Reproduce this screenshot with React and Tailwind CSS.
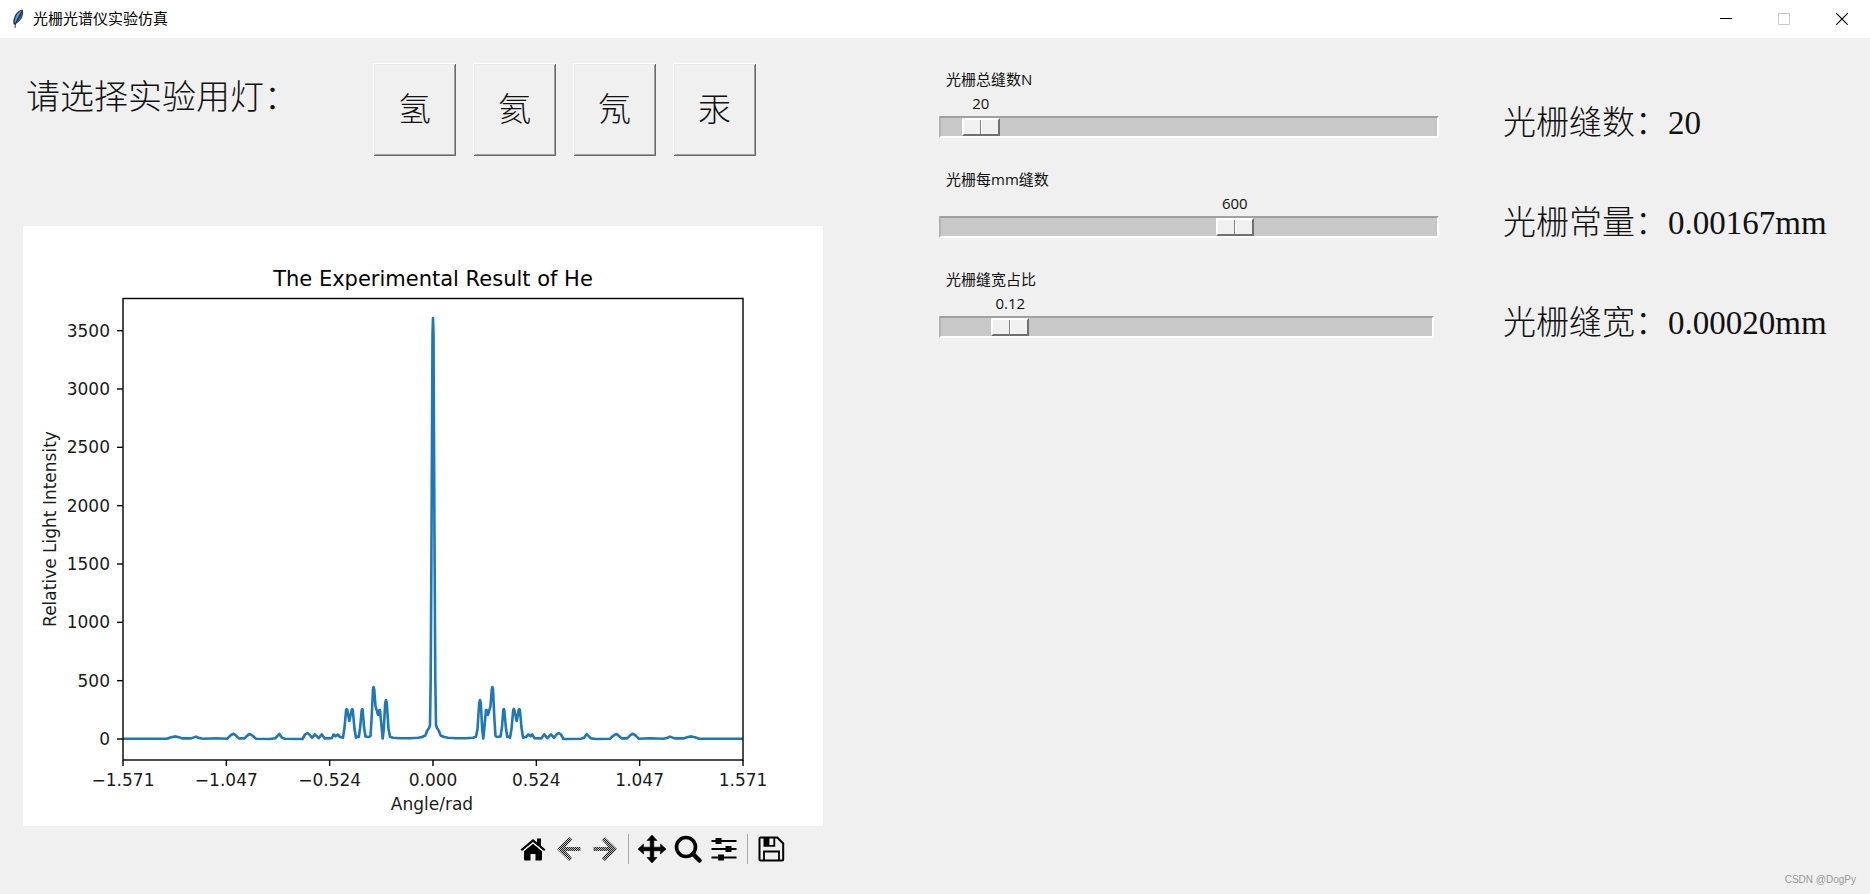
import { useState } from 'react';

const LAMPS = ['氢', '氦', '氖', '汞'];

// right half of the spectrum: [distance from center, height above zero], mirrored for the left half
const SPECTRUM = [
  [0, 421], [0.5, 405], [1, 300], [1.6, 180], [2.3, 60], [3, 14], [4, 11], [6, 8], [7, 5], [8, 3],
  [9, 3], [11, 2], [15, 1.3], [23, 0.7], [33, 0.7], [40, 1.2], [43, 2.3], [44.5, 10], [46.2, 36], [47, 39],
  [47.8, 36], [49.2, 10], [50.3, 0.5], [52, 18], [53, 29], [53.6, 29], [55, 24], [57.5, 33], [58.8, 50],
  [59.4, 52], [60, 50], [61.3, 22], [62.5, 3], [64, 2], [67.5, 2.5], [69, 12], [70.3, 29], [70.8, 30],
  [71.3, 29], [72.8, 12], [74.2, 2], [75.5, 2.5], [77, 1.3], [78.5, 10], [80.2, 29], [80.7, 30], [81.3, 29],
  [83.7, 18], [85.7, 29], [86.3, 30], [86.9, 29], [88.4, 12], [90, 1.3], [93, 2], [95.3, 4.5], [97.5, 2.7],
  [99.3, 4.5], [101.5, 0.7], [108.3, 0.6], [111.3, 4.7], [114.3, 0.8], [118, 4.6], [121, 1.2],
  [123.5, 4.5], [125.7, 6], [128, 4.5], [130.5, 0], [148, 0.3], [151, 1.3], [153.7, 5], [157.5, 0.8],
  [163, 0], [177, 0.3], [180, 3], [183, 5], [185, 4], [188.5, 0.6], [194, 0.6], [197, 3.4], [199.3, 5.2],
  [202, 4], [205.7, 0.3], [217, 0.7], [230, 0.2], [234, 1], [237, 2.4], [241.7, 0.6], [251, 0.6],
  [254, 1.8], [258.3, 2.6], [262, 1.8], [266, 0.2], [310, 0.2],
];

const X_TICKS = ['−1.571', '−1.047', '−0.524', '0.000', '0.524', '1.047', '1.571'];
const Y_TICKS = [0, 500, 1000, 1500, 2000, 2500, 3000, 3500];

function spectrumPoints() {
  const left = [...SPECTRUM].reverse().map(([d, h]) => `${410 - d},${513 - h}`);
  const right = SPECTRUM.slice(1).map(([d, h]) => `${410 + d},${513 - h}`);
  return [...left, ...right].join(' ');
}

function FeatherIcon() {
  return (
    <svg className="w-3 h-5" viewBox="0 0 12 20" aria-hidden="true">
      <path d="M10.6.6C7.500.8 3.600 4 2.300 8.200.9 11.500.9 13.400 2 16l1.300-1c3.800-1.500 6.400-4.700 7.400-8.500.6-2.300.6-4.400-.1-5.900z" fill="#2c3e52" />
      <path d="M10 1.600C7.300 2.400 4.600 5.300 3.500 9c-.6 2-.8 3.800-.4 5.200C6.300 9.800 8.300 6.200 10 1.600z" fill="#5b9ad6" />
      <path d="M10.200 3c-1.200 4.500-3.400 8-6 11 3-1.500 5-4 5.800-7.400.4-1.400.4-2.600.2-3.600z" fill="#3b6794" />
      <path d="M9.600 2.500C7.200 7.500 3.600 11.500 3 19" fill="none" stroke="#1c2530" strokeWidth="0.9" />
    </svg>
  );
}

function TitleBar() {
  return (
    <header className="flex h-[38px] items-center bg-white pl-3">
      <FeatherIcon />
      <h1 className="ml-[9px] pb-0.5 text-[15px] text-black">光栅光谱仪实验仿真</h1>
      <div className="ml-auto flex h-full gap-0.5">
        <button type="button" aria-label="最小化" className="flex w-14 items-center justify-center">
          <svg className="h-3 w-3" viewBox="0 0 12 12"><path d="M0 5.500h12" stroke="#000" /></svg>
        </button>
        <button type="button" aria-label="最大化" disabled className="flex w-14 items-center justify-center">
          <svg className="h-3 w-3" viewBox="0 0 12 12"><path d="M.5.500h11v11H.5z" fill="none" stroke="#c8c8c8" /></svg>
        </button>
        <button type="button" aria-label="关闭" className="flex w-14 items-center justify-center">
          <svg className="h-3 w-3" viewBox="0 0 12 12"><path d="M.3.300l11.400 11.400M11.700.300L.3 11.700" stroke="#000" strokeWidth="1.200" /></svg>
        </button>
      </div>
    </header>
  );
}

function Chart() {
  return (
    <svg className="block w-full bg-white" viewBox="0 0 800 600" fontFamily="'DejaVu Sans', sans-serif" fill="#1a1a1a">
      <text x="410" y="60" fontSize="21" textAnchor="middle" fill="#000">The Experimental Result of He</text>
      {Y_TICKS.map((value) => {
        const y = 513 - value * 0.11667;
        return (
          <g key={value}>
            <path d={`M94 ${y}h6`} stroke="#000" strokeWidth="1.400" />
            <text x="87" y={y + 6} fontSize="17" textAnchor="end">{value}</text>
          </g>
        );
      })}
      {X_TICKS.map((label, i) => {
        const x = 100 + (i * 620) / 6;
        return (
          <g key={label}>
            <path d={`M${x} 534v6`} stroke="#000" strokeWidth="1.400" />
            <text x={x} y="560" fontSize="17" textAnchor="middle">{label}</text>
          </g>
        );
      })}
      <text x="409" y="584" fontSize="17" textAnchor="middle">Angle/rad</text>
      <text transform="translate(33 303) rotate(-90)" fontSize="17" textAnchor="middle">Relative Light Intensity</text>
      <polyline points={spectrumPoints()} fill="none" stroke="#1f77b4" strokeWidth="2.600" strokeLinejoin="round" />
      <rect x="100" y="72.500" width="620" height="461.500" fill="none" stroke="#000" strokeWidth="1.400" />
    </svg>
  );
}

function ToolButton({ label, disabled, children }) {
  return (
    <button type="button" aria-label={label} title={label} disabled={disabled} className="flex h-[30px] w-9 items-center justify-center">
      <svg className="h-[30px] w-[30px]" viewBox="0 0 30 30">{children}</svg>
    </button>
  );
}

function Toolbar() {
  return (
    <div className="flex items-center justify-end pt-2 pr-[34px] pb-2">
      <ToolButton label="Home">
        <path d="M2.500 15.500L15 5l4 3.400V4.500h4v7.300l4.500 3.700-1.500 1.600L15 8 4 17.100z" />
        <path d="M6 17.200L15 9.800l9 7.400V25c0 1-.5 1.500-1.500 1.500H17.500V20h-5v6.500H7.500c-1 0-1.500-.5-1.500-1.500z" />
        <path d="M3.200 16.800L15 7.200l11.800 9.600" fill="none" stroke="#f0f0f0" strokeWidth="0.800" transform="translate(0 1.600)" />
      </ToolButton>
      <ToolButton label="Back" disabled>
        <defs>
          <pattern id="stipple" width="2" height="2" patternUnits="userSpaceOnUse">
            <rect width="2" height="2" fill="#bbb" />
            <path d="M0 0h1v1H0zM1 1h1v1H1z" fill="#222" />
          </pattern>
        </defs>
        <path d="M3 15L15.200 3l3 2.800L11.500 13H26.500v4H11.500l6.700 7.200-3 2.800z" fill="url(#stipple)" />
      </ToolButton>
      <ToolButton label="Forward" disabled>
        <path d="M27 15L14.800 3l-3 2.800L18.500 13H3.500v4H18.500l-6.700 7.200 3 2.800z" fill="url(#stipple)" />
      </ToolButton>
      <span className="mx-[5px] h-[30px] w-px bg-[#a8a8a8]" />
      <ToolButton label="Pan">
        <path d="M15 1l5 5.500h-3.200v6.700h6.700V10l5.500 5-5.500 5v-3.200h-6.700v6.700H20L15 29l-5-5.500h3.200v-6.700H6.500V20L1 15l5.500-5v3.200h6.700V6.500H10z" stroke="#000" strokeWidth="0.600" />
      </ToolButton>
      <ToolButton label="Zoom">
        <circle cx="13" cy="13" r="9.500" fill="none" stroke="#000" strokeWidth="3.600" />
        <path d="M20 20l6.500 6.500" stroke="#000" strokeWidth="4.500" strokeLinecap="round" />
      </ToolButton>
      <ToolButton label="Subplots">
        <path d="M2.500 7h25M2.500 15h25M2.500 23.500h25" stroke="#000" strokeWidth="2" />
        <path d="M6.500 4h6v6h-6zM16.500 12h6v6h-6zM9 20.500h6v6H9z" />
      </ToolButton>
      <span className="mx-[5px] h-[30px] w-px bg-[#a8a8a8]" />
      <ToolButton label="Save">
        <path d="M4.500 3.500h16.700l6 6V25.500a1 1 0 0 1-1 1H4.500a1 1 0 0 1-1-1V4.500a1 1 0 0 1 1-1z" fill="none" stroke="#000" strokeWidth="2" />
        <path d="M8 26v-8.500h15V26" fill="none" stroke="#000" strokeWidth="1.800" />
        <path d="M7.500 3.500v9.300h11.700V3.500h-1.800v7.500h-4V3.500z" />
      </ToolButton>
    </div>
  );
}

function Scale({ id, label, min, max, step, value, onChange, narrow }) {
  const ratio = (value - min) / (max - min);
  return (
    <div className={`flex h-[100px] flex-col ${narrow ? 'w-[495px]' : 'w-[500px]'} max-w-full`}>
      <label htmlFor={id} className="pl-[7px] text-[15px] leading-6">{label}</label>
      <div className="flex px-0.5">
        <span className="basis-0" style={{ flexGrow: ratio }} />
        <output htmlFor={id} className="w-[38px] text-center text-[15px] leading-6">{value}</output>
        <span className="basis-0" style={{ flexGrow: 1 - ratio }} />
      </div>
      <input
        id={id}
        type="range"
        min={min}
        max={max}
        step={step}
        value={value}
        onChange={(e) => onChange(Number(e.target.value))}
        className="mt-px h-[22px] w-full appearance-none border-2 border-t-[#a0a0a0] border-r-white border-b-white border-l-[#b4b4b4] bg-[#c8c8c8] [&::-webkit-slider-thumb]:h-[18px] [&::-webkit-slider-thumb]:w-[38px] [&::-webkit-slider-thumb]:appearance-none [&::-webkit-slider-thumb]:border-2 [&::-webkit-slider-thumb]:border-t-white [&::-webkit-slider-thumb]:border-r-[#707070] [&::-webkit-slider-thumb]:border-b-[#707070] [&::-webkit-slider-thumb]:border-l-white [&::-webkit-slider-thumb]:bg-[linear-gradient(to_right,#f0f0f0_16px,#808080_16px,#808080_17px,#fff_17px,#fff_18px,#f0f0f0_18px)]"
      />
    </div>
  );
}

export default function App() {
  const [lamp, setLamp] = useState('氦');
  const [slits, setSlits] = useState(20);
  const [density, setDensity] = useState(600);
  const [duty, setDuty] = useState(0.12);

  const period = 1 / density;
  const readouts = [
    `光栅缝数：${slits}`,
    `光栅常量：${period.toFixed(5)}mm`,
    `光栅缝宽：${(period * duty).toFixed(5)}mm`,
  ];

  return (
    <div className="flex min-h-screen flex-col bg-[#f0f0f0] font-['Open_Sans','Noto_Sans_CJK_SC',sans-serif] text-[#111]">
      <TitleBar />
      <main className="flex">
        <section className="w-1/2 pl-[23px]">
          <div className="flex h-[188px] pt-[25px]">
            <p className="w-[350px] pt-[11px] pl-[3px] font-['Liberation_Serif','Noto_Sans_CJK_SC',serif] text-[34px] leading-12 font-light">请选择实验用灯：</p>
            <div className="flex gap-[17px]">
              {LAMPS.map((name) => (
                <button
                  key={name}
                  type="button"
                  aria-pressed={lamp === name}
                  onClick={() => setLamp(name)}
                  className="h-[93px] w-[83px] pb-1 font-['Noto_Sans_CJK_SC',serif] text-[33px] font-light shadow-[inset_1px_1px_#fff,inset_-1px_-1px_#696969,inset_2px_2px_#e9e9e9,inset_-2px_-2px_#a0a0a0]"
                >
                  {name}
                </button>
              ))}
            </div>
          </div>
          <div className="max-w-[800px]">
            <Chart />
            <Toolbar />
          </div>
        </section>

        <section className="flex flex-1 pt-[29px] pl-1">
          <div className="w-[564px]">
            <Scale id="slits" label="光栅总缝数N" min={2} max={400} step={1} value={slits} onChange={setSlits} />
            <Scale id="density" label="光栅每mm缝数" min={0} max={1000} step={10} value={density} onChange={setDensity} />
            <Scale id="duty" label="光栅缝宽占比" min={0.01} max={1} step={0.01} value={duty} onChange={setDuty} narrow />
          </div>
          <div className="font-['Liberation_Serif','Noto_Sans_CJK_SC',serif] text-[33px] font-light whitespace-nowrap">
            {readouts.map((text) => (
              <p key={text} className="h-[100px] pt-8 leading-12">{text}</p>
            ))}
          </div>
        </section>
      </main>
      <footer className="mt-auto pr-3.5 pb-2 text-right font-['Liberation_Sans',sans-serif] text-[10px] leading-4 text-[#999]">CSDN @DogPy</footer>
    </div>
  );
}
